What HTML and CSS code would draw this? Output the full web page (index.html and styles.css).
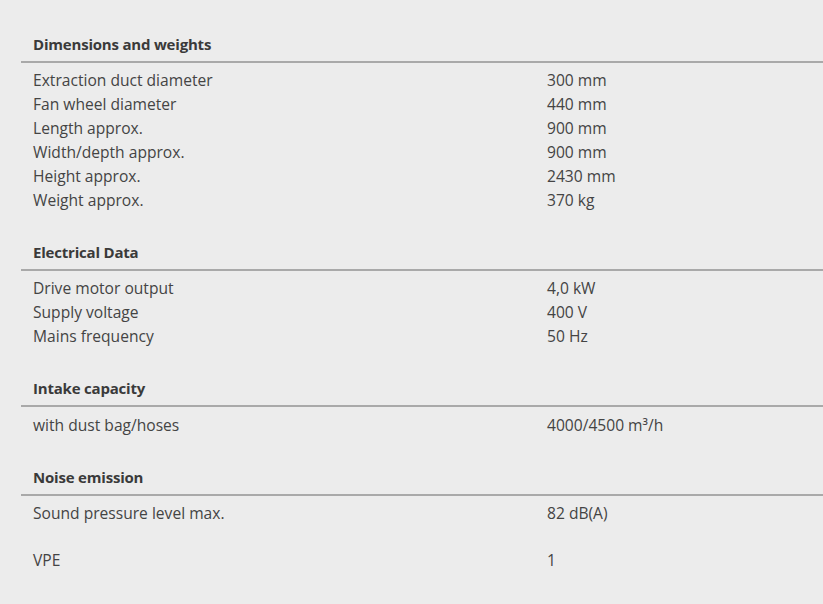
FILE: index.html
```html
<!DOCTYPE html>
<html lang="en">
<head>
<meta charset="utf-8">
<title>Technical data</title>
<link rel="stylesheet" href="styles.css">
</head>
<body>
<div class="specs">
  <section class="group">
    <h3 class="group-title">Dimensions and weights</h3>
    <div class="rows">
      <div class="row"><span class="label">Extraction duct diameter</span><span class="value">300 mm</span></div>
      <div class="row"><span class="label">Fan wheel diameter</span><span class="value">440 mm</span></div>
      <div class="row"><span class="label">Length approx.</span><span class="value">900 mm</span></div>
      <div class="row"><span class="label">Width/depth approx.</span><span class="value">900 mm</span></div>
      <div class="row"><span class="label">Height approx.</span><span class="value">2430 mm</span></div>
      <div class="row"><span class="label">Weight approx.</span><span class="value">370 kg</span></div>
    </div>
  </section>
  <section class="group">
    <h3 class="group-title">Electrical Data</h3>
    <div class="rows">
      <div class="row"><span class="label">Drive motor output</span><span class="value">4,0 kW</span></div>
      <div class="row"><span class="label">Supply voltage</span><span class="value">400 V</span></div>
      <div class="row"><span class="label">Mains frequency</span><span class="value">50 Hz</span></div>
    </div>
  </section>
  <section class="group">
    <h3 class="group-title">Intake capacity</h3>
    <div class="rows rows-low">
      <div class="row"><span class="label">with dust bag/hoses</span><span class="value">4000/4500 m³/h</span></div>
    </div>
  </section>
  <section class="group">
    <h3 class="group-title">Noise emission</h3>
    <div class="rows">
      <div class="row"><span class="label">Sound pressure level max.</span><span class="value">82 dB(A)</span></div>
    </div>
  </section>
  <div class="rows extra">
    <div class="row"><span class="label">VPE</span><span class="value">1</span></div>
  </div>
</div>
</body>
</html>
```

FILE: styles.css
```css
html, body {
  margin: 0;
  padding: 0;
  background: #ececec;
}
body {
  font-family: "Open Sans", "Noto Sans", sans-serif;
  font-size: 15.6px;
  color: #444444;
}
.specs {
  padding: 32px 0 0 21px;
}
.group {
  margin-bottom: 28px;
}
.group-title {
  margin: 0;
  padding: 0 12px 5px;
  font-size: 15px;
  font-weight: 700;
  line-height: 24px;
  color: #3a3a3a;
  border-bottom: 2px solid #a9a9a9;
  letter-spacing: -0.2px;
}
.rows {
  padding-top: 5px;
}
.rows-low {
  padding-top: 6px;
}
.row {
  display: grid;
  grid-template-columns: 514px 1fr;
  padding-left: 12px;
  line-height: 24px;
  height: 24px;
}
.extra {
  padding-top: 0;
  margin-top: -5px;
}
```
